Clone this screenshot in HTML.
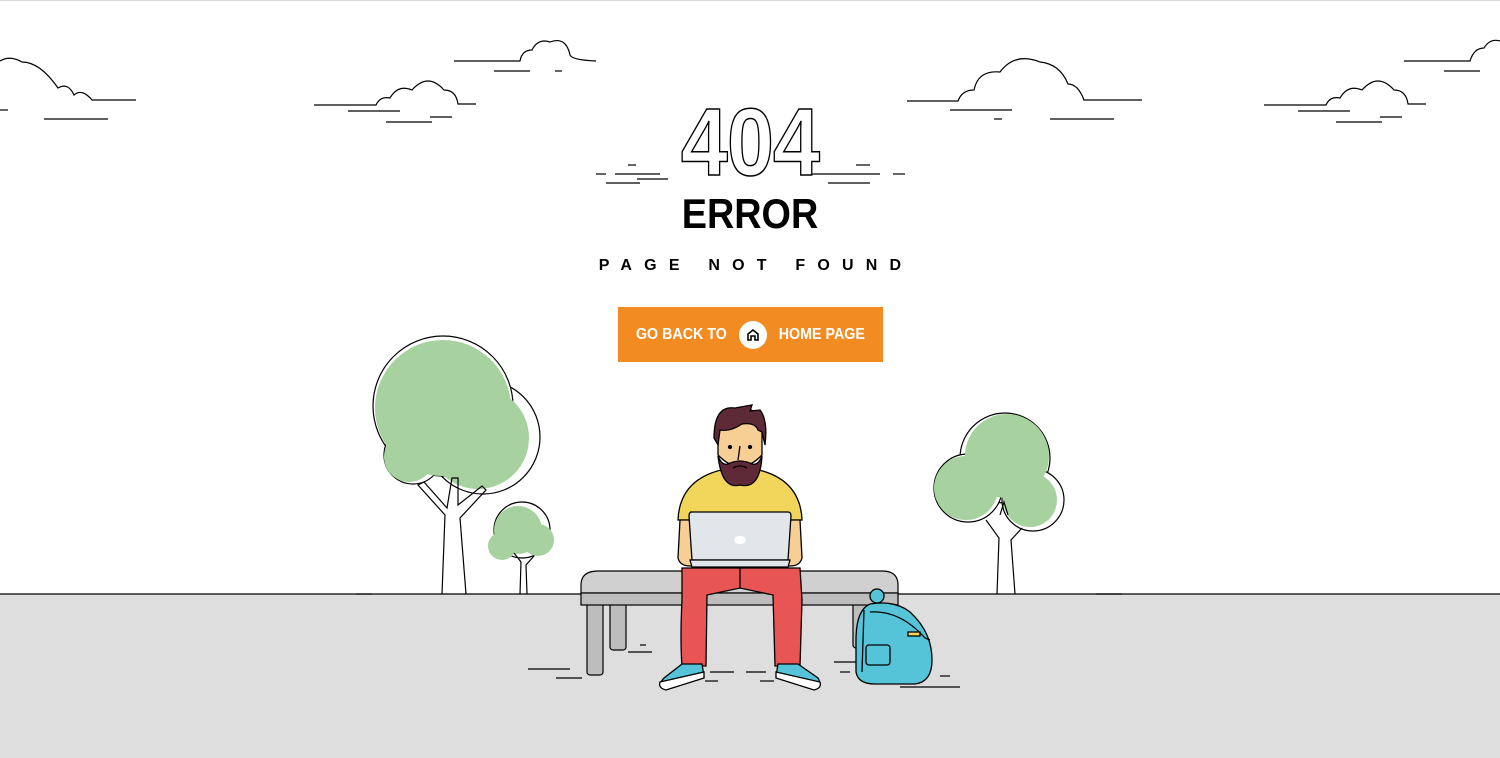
<!DOCTYPE html>
<html><head><meta charset="utf-8"><style>
html,body{margin:0;padding:0;background:#fff;width:1500px;height:758px;overflow:hidden;font-family:"Liberation Sans",sans-serif}
.abs{position:absolute}
</style></head><body>
<svg class="abs" style="left:0;top:0" width="1500" height="758" viewBox="0 0 1500 758" fill="none" stroke="#000" stroke-width="1.2">
<rect x="0" y="594" width="1500" height="164" fill="#dedede" stroke="none"/>
<line x1="0" y1="594" x2="1500" y2="594"/>
<line x1="0" y1="0.5" x2="1500" y2="0.5" stroke="#ddd"/>
<g>
<path d="M0 61 Q10 55 22 62 Q40 62 58 88 Q68 82 74 95 Q82 88 92 100 L136 100"/>
<line x1="0" y1="110" x2="8" y2="110"/><line x1="44" y1="119" x2="108" y2="119"/>
<path d="M314 105 L376 105 Q380 96 390 98 Q398 84 412 90 Q428 72 444 90 Q456 90 458 104 L476 104"/>
<line x1="348" y1="111" x2="400" y2="111"/><line x1="386" y1="122" x2="432" y2="122"/><line x1="430" y1="117" x2="452" y2="117"/>
<path d="M454 61 L520 61 Q522 50 532 50 Q538 38 550 42 Q566 36 570 55 Q572 60 596 61"/>
<line x1="494" y1="71" x2="530" y2="71"/><line x1="555" y1="71" x2="562" y2="71"/>
<path d="M907 101 L958 101 Q962 90 974 90 Q978 70 1000 72 Q1015 52 1040 62 Q1060 64 1068 84 Q1078 84 1084 100 L1142 100"/>
<line x1="950" y1="110" x2="1012" y2="110"/><line x1="1050" y1="119" x2="1114" y2="119"/><line x1="994" y1="119" x2="1002" y2="119"/>
<path d="M1264 105 L1326 105 Q1330 96 1340 98 Q1348 84 1362 90 Q1378 72 1394 90 Q1406 90 1408 104 L1426 104"/>
<line x1="1298" y1="111" x2="1350" y2="111"/><line x1="1336" y1="122" x2="1382" y2="122"/><line x1="1380" y1="117" x2="1402" y2="117"/>
<path d="M1404 61 L1470 61 Q1474 48 1484 48 Q1490 38 1500 41"/>
<line x1="1444" y1="71" x2="1480" y2="71"/>
</g>
<g>
<line x1="596" y1="174" x2="606" y2="174"/><line x1="615" y1="174" x2="660" y2="174"/><line x1="628" y1="165" x2="636" y2="165"/>
<line x1="606" y1="183" x2="640" y2="183"/><line x1="637" y1="179" x2="668" y2="179"/>
<line x1="812" y1="174" x2="880" y2="174"/><line x1="856" y1="165" x2="870" y2="165"/><line x1="893" y1="174" x2="905" y2="174"/>
<line x1="828" y1="183" x2="870" y2="183"/>
</g>
<g>
<circle cx="483" cy="437" r="57" fill="#fff"/>
<circle cx="443" cy="406" r="70" fill="#fff"/>
<circle cx="413" cy="455" r="29" fill="#fff"/>
<circle cx="443" cy="408" r="68" fill="#a8d1a0" stroke="none"/>
<circle cx="478" cy="438" r="51" fill="#a8d1a0" stroke="none"/>
<circle cx="409" cy="457" r="25" fill="#a8d1a0" stroke="none"/>
<path d="M442 594 L445 515 L418 485 L424 482 L447 508 L452 478 L458 478 L458 505 L482 486 L486 490 L460 518 L466 594"/>
<circle cx="522" cy="530" r="28" fill="#fff"/>
<circle cx="518" cy="530" r="24" fill="#a8d1a0" stroke="none"/>
<circle cx="538" cy="540" r="16" fill="#a8d1a0" stroke="none"/>
<circle cx="502" cy="546" r="14" fill="#a8d1a0" stroke="none"/>
<path d="M520 594 L521 562 L514 553 M527 594 L526 565 L534 556"/>
<line x1="356" y1="594" x2="372" y2="594"/>
</g>
<g>
<circle cx="1005" cy="458" r="45" fill="#fff"/>
<circle cx="968" cy="488" r="34" fill="#fff"/>
<circle cx="1033" cy="500" r="31" fill="#fff"/>
<circle cx="1007" cy="456" r="42" fill="#a8d1a0" stroke="none"/>
<circle cx="966" cy="488" r="32" fill="#a8d1a0" stroke="none"/>
<circle cx="1030" cy="500" r="27" fill="#a8d1a0" stroke="none"/>
<path d="M997 594 L999 538 L986 520 M1015 594 L1011 540 L1022 528 M1000 515 L1004 502 L1008 515"/>
<line x1="1096" y1="594" x2="1122" y2="594"/>
</g>
<g stroke="#000">
<rect x="587" y="600" width="16" height="75" rx="3" fill="#bdbdbd"/>
<rect x="610" y="600" width="16" height="50" rx="3" fill="#bdbdbd"/>
<rect x="853" y="600" width="14" height="48" rx="3" fill="#bdbdbd"/>
<path d="M598 571 L882 571 Q898 571 898 585 L898 593 L581 593 L581 585 Q581 571 598 571Z" fill="#d0d0d0"/>
<rect x="581" y="593" width="317" height="12" fill="#bdbdbd"/>
</g>
<g>
<line x1="528" y1="669" x2="570" y2="669"/><line x1="556" y1="678" x2="582" y2="678"/><line x1="628" y1="652" x2="652" y2="652"/><line x1="640" y1="645" x2="646" y2="645"/>
<line x1="710" y1="672" x2="734" y2="672"/><line x1="746" y1="672" x2="766" y2="672"/><line x1="705" y1="681" x2="718" y2="681"/><line x1="760" y1="681" x2="774" y2="681"/>
<line x1="834" y1="662" x2="858" y2="662"/><line x1="840" y1="672" x2="850" y2="672"/><line x1="900" y1="687" x2="960" y2="687"/><line x1="940" y1="676" x2="950" y2="676"/>
</g>
<g stroke="#000" stroke-width="1.3">
<path d="M678 520 Q680 472 740 467 Q800 472 802 520 Z" fill="#f2d65b"/>
<path d="M680 520 L678 558 Q680 566 690 566 L700 566 L700 520 Z" fill="#f7cf94"/>
<path d="M800 520 L802 558 Q800 566 790 566 L780 566 L780 520 Z" fill="#f7cf94"/>
<path d="M728 460 L728 477 Q740 488 752 477 L752 460 Z" fill="#f7cf94"/>
<path d="M718 430 Q718 408 740 408 Q762 408 762 430 L762 455 Q740 478 718 455 Z" fill="#f7cf94"/>
<path d="M714 438 Q714 405 735 408 L752 405 L750 411 L760 410 Q768 420 765 445 L762 432 L758 430 Q755 422 742 424 Q730 432 720 430 L718 445 Z" fill="#5e2a38"/>
<path d="M718 456 Q722 490 740 485 Q760 490 762 456 Q758 466 752 464 Q740 458 728 464 Q722 466 718 456Z" fill="#5e2a38"/>
<path d="M733 468 Q740 464 747 468"/>
<circle cx="730" cy="447" r="1.5" fill="#000"/><circle cx="750" cy="447" r="1.5" fill="#000"/>
<line x1="740" y1="446" x2="738" y2="460"/>
<path d="M682 568 L682 600 Q680 640 682 666 L706 666 L707 595 L740 588 L773 595 L775 666 L800 666 L802 600 L800 568 Z" fill="#e85555"/>
<line x1="740" y1="568" x2="740" y2="588"/>
<path d="M690 512 L788 512 Q791 512 791 516 L788 560 L692 560 L689 516 Q689 512 692 512Z" fill="#e0e6ea"/>
<path d="M690 560 L790 560 L788 567 L692 567 Z" fill="#e0e6ea"/>
<ellipse cx="740" cy="540" rx="6" ry="4" fill="#fff" stroke="none"/>
<path d="M682 664 L702 664 L704 676 L664 688 Q658 684 664 678 Z" fill="#55c4d8"/>
<path d="M660 682 L704 672 L704 678 L666 690 Q658 688 660 682Z" fill="#fff"/>
<path d="M778 664 L798 664 L818 678 Q822 684 816 688 L776 676 Z" fill="#55c4d8"/>
<path d="M776 672 L820 682 Q822 688 814 690 L776 678Z" fill="#fff"/>
</g>
<g stroke="#000" stroke-width="1.3">
<circle cx="877" cy="596" r="7" fill="#55c4d8"/>
<path d="M870 604 Q856 610 856 640 L856 672 Q858 684 875 684 L915 684 Q932 682 932 660 Q932 632 910 612 Q895 600 870 604Z" fill="#55c4d8"/>
<path d="M870 612 Q900 610 925 638 L930 640"/>
<path d="M864 610 L862 672"/>
<rect x="866" y="645" width="24" height="20" rx="3" fill="#55c4d8"/>
<rect x="908" y="632" width="12" height="4" fill="#f2d65b"/>
</g>
</svg>
<div class="abs" style="left:600px;top:95px;width:300px;text-align:center;font-size:96px;font-weight:bold;color:#fff;-webkit-text-stroke:1.5px #000;letter-spacing:-1px;line-height:96px;transform:scaleX(0.88)">404</div>
<div class="abs" style="left:600px;top:190px;width:300px;text-align:center;font-size:42px;font-weight:bold;color:#000;line-height:48px;transform:scaleX(0.9)">ERROR</div>
<div class="abs" style="left:560px;top:256px;width:380px;text-align:center;font-size:16px;font-weight:bold;letter-spacing:12.2px;padding-left:12px;line-height:20px;white-space:nowrap;box-sizing:border-box">PAGE NOT FOUND</div>
<div class="abs" style="left:618px;top:307px;width:265px;height:55px;background:#f28c22;color:#fff;font-weight:bold;font-size:15.5px;display:flex;align-items:center;justify-content:center;gap:8px">
<span style="display:inline-block;transform:scaleX(0.92)">GO BACK TO</span>
<span style="display:inline-block;width:28px;height:28px;border-radius:50%;background:#fff"><svg width="28" height="28" viewBox="0 0 28 28" fill="none" stroke="#000" stroke-width="1.6"><path d="M9 19 L9 13 L14 9 L19 13 L19 19 L16 19 L16 15 L12 15 L12 19 Z"/></svg></span>
<span style="display:inline-block;transform:scaleX(0.92)">HOME PAGE</span>
</div>
</body></html>
